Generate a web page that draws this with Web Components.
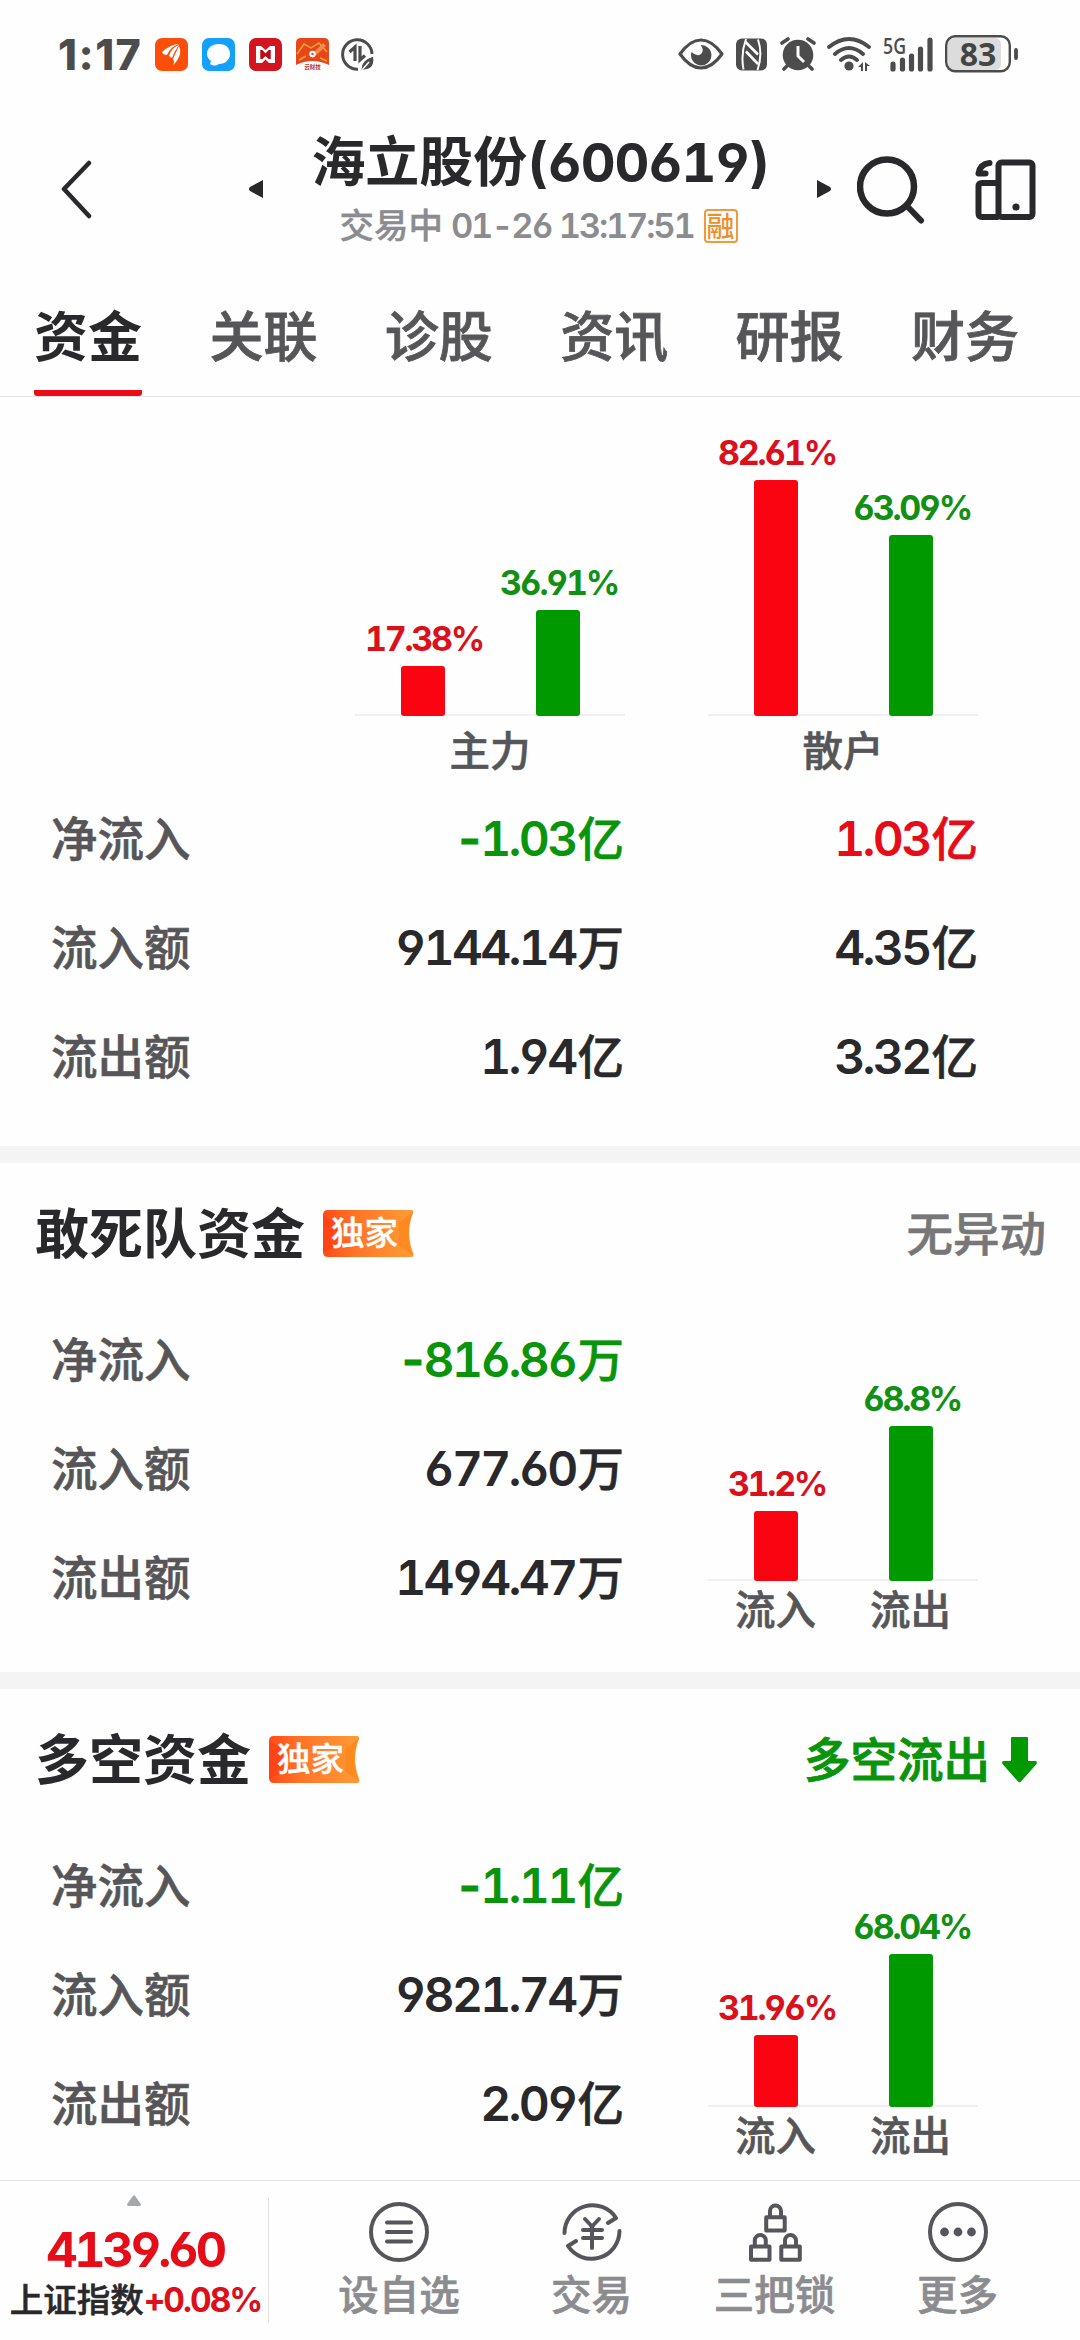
<!DOCTYPE html>
<html lang="zh-CN">
<head>
<meta charset="utf-8">
<title>海立股份(600619)</title>
<style>
  html, body { margin: 0; padding: 0; }
  body {
    --red: #e60c18;
    --green: #0a940c;
    --ink: #29292b;
    --sub: #565658;
    width: 1080px;
    height: 2340px;
    overflow: hidden;
    display: flex;
    flex-direction: column;
    background: #fefefe;
    color: var(--ink);
    font-family: Inter, "Noto Sans CJK SC", sans-serif;
    font-feature-settings: "tnum", "cv03", "cv04";
  }
  main { flex: 1; min-height: 0; overflow: hidden; }
</style>
</head>
<body>
<status-bar time="1:17" battery="83"></status-bar>
<stock-header name="海立股份" code="(600619)" state="交易中" time="01-26 13:17:51"></stock-header>
<tab-bar items="资金,关联,诊股,资讯,研报,财务" active="0"></tab-bar>
<main>
  <fund-overview>
    <bar-chart slot="chart" unit="2.863" bars="17.38:,36.91:" caption="主力"></bar-chart>
    <bar-chart slot="chart" unit="2.863" bars="82.61:,63.09:" caption="散户"></bar-chart>
    <fund-row label="净流入" values="-1.03亿,1.03亿" signed></fund-row>
    <fund-row label="流入额" values="9144.14万,4.35亿"></fund-row>
    <fund-row label="流出额" values="1.94亿,3.32亿"></fund-row>
  </fund-overview>
  <fund-card heading="敢死队资金">
    <span slot="status">无异动</span>
    <fund-row label="净流入" values="-816.86万" signed></fund-row>
    <fund-row label="流入额" values="677.60万"></fund-row>
    <fund-row label="流出额" values="1494.47万"></fund-row>
    <bar-chart slot="chart" unit="2.25" bars="31.2:流入,68.8:流出"></bar-chart>
  </fund-card>
  <fund-card heading="多空资金" trend="down">
    <span slot="status">多空流出</span>
    <fund-row label="净流入" values="-1.11亿" signed></fund-row>
    <fund-row label="流入额" values="9821.74万"></fund-row>
    <fund-row label="流出额" values="2.09亿"></fund-row>
    <bar-chart slot="chart" unit="2.25" bars="31.96:流入,68.04:流出"></bar-chart>
  </fund-card>
</main>
<bottom-bar>
  <index-quote slot="quote" value="4139.60" name="上证指数" change="+0.08%"></index-quote>
  <nav-item icon="list">设自选</nav-item>
  <nav-item icon="trade">交易</nav-item>
  <nav-item icon="locks">三把锁</nav-item>
  <nav-item icon="more">更多</nav-item>
</bottom-bar>

<script>
// Wraps the numeric part of a value so it can be sized apart from the unit
function splitUnit(text) {
  return text.replace(/^([-+\d.]+)/, '<span class="num">$1</span>').replace('>-', '><span class="minus">-</span>');
}

class StatusBar extends HTMLElement {
  connectedCallback() {
    this.attachShadow({ mode: 'open' }).innerHTML = `
      <style>
        :host { display: flex; align-items: center; height: 108px; flex: none; color: #4c4c4c; box-sizing: border-box; padding: 0 61px 0 58px; }
        .time { font-size: 43px; font-weight: 800; line-height: 60px; width: 97px; white-space: nowrap; font-feature-settings: normal; letter-spacing: 1.500px; }
        .apps { display: flex; gap: 14px; }
        .sys { display: flex; align-items: center; margin-left: auto; }
        svg { display: block; }
        .batt { position: relative; }
        .pct { position: absolute; left: 0; top: 0; width: 66px; text-align: center; font: 700 32px/38px "Open Sans", sans-serif; color: #444; }
      </style>
      <div class="time">${this.getAttribute('time')}</div>
      <div class="apps">
        <svg width="33" height="33" viewBox="0 0 33 33"><rect width="33" height="33" rx="7" fill="#fb4f09"/>
          <path d="M7 14Q16 6 24 6Q15 9 12 17Q8 17 7 14M14 18Q16 10 24 7Q20 12 17 20ZM18 21Q22 12 24 8Q26 12 25 16Q23 23 18 27Q20 24 18 21" fill="#fff"/></svg>
        <svg width="33" height="33" viewBox="0 0 33 33"><rect width="33" height="33" rx="7" fill="#14a0fb"/>
          <path d="M17 6C24 6 28 10 28 16C28 22 23 26 17 26Q12 29 8 26L9 23Q5 20 5 16C5 10 10 6 17 6" fill="#fff"/></svg>
        <svg width="33" height="33" viewBox="0 0 33 33"><rect width="33" height="33" rx="7" fill="#d31520"/>
          <path d="M7 8H12L16.500 12L21 8H26V25H20L16.500 21.500L13 25H7ZM11.500 12V21H13L16.500 18L20 21H21.500V12H20L16.500 15.500L13 12Z" fill="#fff" fill-rule="evenodd"/>
          <path d="M11.500 12H13L16.500 15.500L20 12H21.500V21H20L16.500 18L13 21H11.500Z" fill="#b70d18"/><path d="M14 8H19L16.500 11.500ZM14 25L16.500 22L19 25Z" fill="#d31520"/></svg>
        <svg width="33" height="33" viewBox="0 0 33 33"><path d="M5 0H28Q33 0 33 5V27Q16 19 0 27V5Q0 0 5 0" fill="#e5471b"/>
          <path d="M1 16L8 6L15 10L23 5L31 14M3 22L10 18M24 20L31 23" stroke="#f4a12f" stroke-width="1.500" fill="none"/><path d="M14 18L27 5L30 8L17 20Z" fill="#f58b55"/>
          <circle cx="16.500" cy="16" r="3.200" fill="#fff"/><circle cx="16.500" cy="16" r="1.200" fill="#e5471b"/>
          <text x="16.500" y="31" font-size="5.500" font-weight="700" text-anchor="middle" fill="#b8301a">云财技</text></svg>
        <svg width="33" height="33" viewBox="0 0 33 33" style="margin-left:-2px" fill="none" stroke="#4c4c4c"><path d="M17 31.200A14.700 14.700 0 1 1 31 16" stroke-width="3"/>
          <path d="M8.500 14L14 9V23M19 8V22L24 17.500" stroke-width="3.200"/>
          <path d="M20 33Q19 22 32.500 18Q35 31 23.500 32Z" fill="#4c4c4c" stroke="#fefefe" stroke-width="1.200"/><path d="M21 32L28 24" stroke="#fefefe" stroke-width="1.500"/></svg>
      </div>
      <div class="sys">
        <svg width="46" height="32" viewBox="0 0 46 32" style="margin-right:12px"><path d="M2 16Q12 2 23 2T44 16Q34 30 23 30T2 16Z" fill="none" stroke="#4c4c4c" stroke-width="3.200" stroke-linejoin="round"/>
          <path d="M22.500 7A10.200 10.200 0 1 1 13.500 14Q20 20 24 15Q26 11 22.500 7" fill="#4c4c4c"/></svg>
        <svg width="32" height="33" viewBox="0 0 32 33" style="margin-right:12px"><rect width="31" height="32" rx="6" fill="#4c4c4c" y="0.500"/>
          <path d="M10 1Q4.500 16 7.500 31.500M22 1.500Q27 16 21.500 32" stroke="#fefefe" stroke-width="2" fill="none"/>
          <path d="M9.500 4L22 16.500M10 13.500L22 26" stroke="#fefefe" stroke-width="2.600"/></svg>
        <svg width="36" height="34" viewBox="0 0 36 34" style="margin-right:11px"><circle cx="18" cy="18" r="15.300" fill="#4c4c4c"/>
          <path d="M2 6L8 2M28 2L34 6M8 28L4 32M28 28L32 32" stroke="#4c4c4c" stroke-width="3.600" stroke-linecap="round"/>
          <path d="M18 9V19L24 25" stroke="#fefefe" stroke-width="3" fill="none"/></svg>
        <svg width="44" height="34" viewBox="0 0 44 34" style="margin-right:12px"><g fill="none" stroke="#4c4c4c" stroke-width="3.800" stroke-linecap="round">
          <path d="M2 10Q22 -6 42 10M8 17Q22 5 36 17M14 23Q22 16 30 23"/></g><circle cx="22" cy="29" r="4.600" fill="#4c4c4c"/>
          <path d="M31 30L36 25V34H34V30ZM38 25L43 29H40V34H38Z" fill="#4c4c4c"/></svg>
        <svg width="52" height="35" viewBox="0 0 52 35" overflow="visible" style="margin-right:10px"><text x="0" y="17" font-size="22" font-weight="600" textLength="23" lengthAdjust="spacingAndGlyphs" fill="#4c4c4c" font-family="Open Sans">5G</text>
          <path d="M10 27V32M19.500 23V32M28.500 19V32M37.500 12V32M47 3V32" stroke="#4c4c4c" stroke-width="5.200" stroke-linecap="round"/></svg>
        <div class="batt"><svg width="74" height="38" viewBox="0 0 74 38"><rect x="3" y="3" width="53" height="32" rx="6" fill="#dcdcdc"/>
          <rect x="1.200" y="1.200" width="63.600" height="35" rx="9" fill="none" stroke="#4c4c4c" stroke-width="2.400"/><path d="M71 15V23" stroke="#4c4c4c" stroke-width="3.800" stroke-linecap="round"/></svg>
          <div class="pct">${this.getAttribute('battery')}</div></div>
      </div>`;
  }
}

class StockHeader extends HTMLElement {
  connectedCallback() {
    this.attachShadow({ mode: 'open' }).innerHTML = `
      <style>
        :host { display: grid; grid-template-columns: 249px 582px 249px; height: 167px; flex: none; }
        .left { padding: 52px 0 0 60px; }
        .mid { display: grid; grid-template-columns: 14px 1fr 14px; }
        .mid > svg { margin-top: 72px; }
        .text { text-align: center; }
        .title { margin-top: 20px; font-size: 54px; line-height: 70px; font-weight: 700; white-space: nowrap; }
        .code { letter-spacing: -1.300px; }
        .sub { display: flex; justify-content: center; align-items: center; margin-top: 7px; padding-right: 3px; font-size: 34.500px; line-height: 42px; font-weight: 500; color: #8b8c90; white-space: nowrap; }
        .sub span:first-child { -webkit-text-stroke: 0.4px; }
        .sub .time { font-weight: 600; letter-spacing: -2.200px; margin: 0 10px 0 8px; }
        .margin { box-sizing: border-box; width: 34px; height: 34px; border: 2px solid #f09a3e; border-radius: 4px; color: #ee8f2d; font: 500 28px/29px "Noto Sans CJK SC", sans-serif; text-align: center; }
        .right { display: flex; padding: 48px 0 0 26px; gap: 50px; }
        svg { display: block; }
      </style>
      <div class="left"><svg width="34" height="60" viewBox="0 0 34 60"><path d="M29 3L4 29L29 56" fill="none" stroke="#29292b" stroke-width="4.500" stroke-linecap="round" stroke-linejoin="round"/></svg></div>
      <div class="mid">
        <svg width="14" height="18" viewBox="0 0 14 18"><path d="M14 0V18L1 11Q-1 9 1 7Z" fill="#29292b"/></svg>
        <div class="text">
          <div class="title">${this.getAttribute('name')}<span class="code">${this.getAttribute('code')}</span></div>
          <div class="sub"><span>${this.getAttribute('state')}</span><span class="time">${this.getAttribute('time')}</span><span class="margin">融</span></div>
        </div>
        <svg width="14" height="18" viewBox="0 0 14 18"><path d="M0 0V18L13 11Q15 9 13 7Z" fill="#29292b"/></svg>
      </div>
      <div class="right">
        <svg width="68" height="69" viewBox="0 0 68 69" fill="none" stroke="#29292b" stroke-width="6.500"><circle cx="30" cy="30.500" r="27"/><path d="M50 50L64 64.500" stroke-width="6" stroke-linecap="round"/></svg>
        <svg width="62" height="62" viewBox="0 0 62 62" fill="none" stroke="#29292b" stroke-width="6" style="margin-top:3px">
          <rect x="23.500" y="3.500" width="34" height="54.500" rx="3"/><path d="M23.500 24H7Q3.500 24 3.500 27.500V54.500Q3.500 58 7 58H23.500"/>
          <path d="M14.500 4Q5 5 3.500 14.500H10.500" stroke-width="6" stroke-linecap="round" stroke-linejoin="round"/><circle cx="41" cy="48" r="3.600" fill="#29292b" stroke="none"/></svg>
      </div>`;
  }
}

class TabBar extends HTMLElement {
  connectedCallback() {
    const active = Number(this.getAttribute('active'));
    const tabs = this.getAttribute('items').split(',')
      .map((t, i) => `<div class="tab${i === active ? ' on' : ''}">${t}</div>`).join('');
    this.attachShadow({ mode: 'open' }).innerHTML = `
      <style>
        :host { display: flex; gap: 67.400px; box-sizing: border-box; height: 122px; flex: none; padding: 0 34px; border-bottom: 1px solid #e3e3e3; }
        .tab { box-sizing: border-box; width: 108px; height: 121px; padding-top: 26px; font-size: 54px; line-height: 74px; font-weight: 500; color: #565658; text-align: center; white-space: nowrap; -webkit-text-stroke: 0.8px; }
        .on { color: #29292b; font-weight: 700; -webkit-text-stroke: 0; background: linear-gradient(#ee0a17, #ee0a17) no-repeat bottom / 108px 6px; border-radius: 0 0 3px 3px; }
      </style>${tabs}`;
  }
}

class BarChart extends HTMLElement {
  connectedCallback() {
    const unit = Number(this.getAttribute('unit'));
    const caption = this.getAttribute('caption');
    const bars = this.getAttribute('bars').split(',').map(b => b.split(':'));
    const cols = bars.map(([pct], i) => `
      <div class="col ${i ? 'out' : 'in'}"><span>${pct}%</span><i style="height:${(pct * unit).toFixed(1)}px"></i></div>`).join('');
    const names = caption ? `<span>${caption}</span>` : bars.map(b => `<span>${b[1]}</span>`).join('');
    this.attachShadow({ mode: 'open' }).innerHTML = `
      <style>
        :host { display: flex; flex-direction: column; width: 270px; }
        .plot { flex: 1; display: flex; background: linear-gradient(#f0f0f0, #f0f0f0) no-repeat bottom / 100% 2px; }
        .col { width: 135px; display: flex; flex-direction: column; justify-content: flex-end; align-items: center; }
        .col span { font-size: 34px; line-height: 40px; font-weight: 650; letter-spacing: -2.300px; margin: 0 0 7px 3px; }
        .col i { width: 44px; border-radius: 3px; }
        .in { color: #dc101b; }
        .out { color: #119014; }
        .in i { background: #fa0411; }
        .out i { background: #009900; }
        .names { display: flex; box-sizing: border-box; height: ${caption ? 68 : 58}px; padding-top: ${caption ? 3 : 2}px; align-items: center; font-size: 40.500px; line-height: 50px; font-weight: 500; color: #565658; -webkit-text-stroke: 0.6px; }
        .names span { flex: 1; text-align: center; }
      </style>
      <div class="plot">${cols}</div>
      <div class="names">${names}</div>`;
  }
}

class FundRow extends HTMLElement {
  connectedCallback() {
    const signed = this.hasAttribute('signed');
    const values = this.getAttribute('values').split(',').map(v => {
      const tone = signed ? (v.startsWith('-') ? 'down' : 'up') : '';
      return `<div class="value ${tone}">${splitUnit(v)}</div>`;
    }).join('');
    this.attachShadow({ mode: 'open' }).innerHTML = `
      <style>
        :host { display: grid; grid-template-columns: 200px 373px 354px; height: 109px; padding-left: 51px; align-items: center; font-size: 46.500px; line-height: 60px; }
        .label { color: var(--sub); font-weight: 500; -webkit-text-stroke: 0.6px; }
        .value { text-align: right; font-weight: 500; white-space: nowrap; -webkit-text-stroke: 0.6px; }
        .num { font-size: 48px; font-weight: 600; letter-spacing: -2.700px; margin-right: 2px; -webkit-text-stroke: 0; }
        .minus { letter-spacing: -5px; -webkit-text-stroke: 1px; }
        .up { color: var(--red); }
        .down { color: var(--green); }
      </style>
      <div class="label">${this.getAttribute('label')}</div>${values}`;
  }
}

class FundOverview extends HTMLElement {
  connectedCallback() {
    this.attachShadow({ mode: 'open' }).innerHTML = `
      <style>
        :host { display: block; height: 749px; }
        .charts { display: flex; gap: 83px; height: 387px; padding-left: 355px; }
      </style>
      <div class="charts"><slot name="chart"></slot></div>
      <slot></slot>`;
  }
}

class FundCard extends HTMLElement {
  connectedCallback() {
    const down = this.getAttribute('trend') === 'down';
    this.attachShadow({ mode: 'open' }).innerHTML = `
      <style>
        :host { display: block; border-top: 17px solid #f4f4f4; }
        .head { display: flex; align-items: center; height: 142px; padding: 0 34px 0 35px; line-height: 70px; }
        h2 { margin: 2px 18px 0 0; font-size: 54px; font-weight: 700; }
        .status { display: flex; align-items: center; margin-left: auto; font-size: 46.500px; font-weight: 500; color: #777; -webkit-text-stroke: 0.6px; }
        .status.down { color: var(--green); -webkit-text-stroke: 1px; padding-right: 9px; gap: 12px; }
        .body { display: grid; grid-template-columns: 624px 270px; column-gap: 84px; height: 367px; }
        .chart { display: grid; height: 334px; }
      </style>
      <div class="head">
        <h2>${this.getAttribute('heading')}</h2><only-tag>独家</only-tag>
        <div class="status ${down ? 'down' : ''}"><slot name="status"></slot>
          ${down ? '<svg width="35" height="46" viewBox="0 0 35 46"><path d="M10 0H25Q26 0 26 1V24H34Q35.500 25 34.500 27L19 44.500Q17.500 46 16 44.500L0.500 27Q-.5 25 1 24H9V1Q9 0 10 0" fill="#009900"/></svg>' : ''}
        </div>
      </div>
      <div class="body">
        <div><slot></slot></div>
        <div class="chart"><slot name="chart"></slot></div>
      </div>`;
  }
}

class OnlyTag extends HTMLElement {
  connectedCallback() {
    this.attachShadow({ mode: 'open' }).innerHTML = `
      <style>
        :host { display: grid; width: 91px; height: 47px; margin-top: -1px; }
        svg, span { grid-area: 1 / 1; }
        span { z-index: 1; padding-left: 8px; font-size: 33.500px; line-height: 47px; font-weight: 500; color: #fff; -webkit-text-stroke: 0.4px; }
      </style>
      <svg width="91" height="47" viewBox="0 0 91 47">
        <defs><linearGradient id="g"><stop stop-color="#ff4a17"/><stop offset=".35" stop-color="#ff7428"/><stop offset="1" stop-color="#ff9c36"/></linearGradient></defs>
        <path d="M5 0H88Q91 0 90 3Q82 23 90.500 44Q91 47 88 47H5Q0 47 0 42V5Q0 0 5 0" fill="url(#g)"/>
        <path d="M0 5L14 13V35L0 43Z" fill="#ff3d12" opacity=".6"/><path d="M90 2L76 13V35L90 46Q81 23 90 2" fill="#fd8a1e"/>
      </svg>
      <span><slot></slot></span>`;
  }
}

class IndexQuote extends HTMLElement {
  connectedCallback() {
    this.attachShadow({ mode: 'open' }).innerHTML = `
      <style>
        :host { display: flex; flex-direction: column; align-items: center; width: 268px; color: var(--red); }
        svg { margin-top: 14px; }
        b { margin: 14px 0 0 2px; font-size: 48.500px; line-height: 60px; font-weight: 700; letter-spacing: -3.400px; }
        div { line-height: 40px; margin: 0 0 0 3px; font-size: 33.500px; font-weight: 650; letter-spacing: -2px; white-space: nowrap; color: #dc101b; }
        em { font-style: normal; font-weight: 500; color: #29292b; letter-spacing: 0; -webkit-text-stroke: 0.6px; }
      </style>
      <svg width="14" height="11" viewBox="0 0 14 11"><path d="M6 .8Q7 -.5 8 .8L13.800 9Q14 11 12.500 11H1.500Q0 11 .2 9Z" fill="#a6a7a9"/></svg>
      <b>${this.getAttribute('value')}</b>
      <div><em>${this.getAttribute('name')}</em>${this.getAttribute('change')}</div>`;
  }
}

const NAV_ICONS = {
  list: '<circle cx="30" cy="30" r="28"/><path d="M18 20.500H42M18 30H42M18 39.500H42"/>',
  trade: '<path d="M2.500 31A28 28 0 0 1 54 16L46 21M57.500 29A28 28 0 0 1 6 44L14 39"/><path d="M23 17L30 24.500L37 17M21 28H40M21 36H40M30 25V46"/>',
  locks: '<rect x="21.200" y="15.200" width="18.500" height="13.200"/><path d="M25 15V9A5.500 5.500 0 0 1 36 9V15"/><rect x="6" y="44.500" width="18.500" height="13.200"/><path d="M9.800 44V38.500A5.500 5.500 0 0 1 20.800 38.500V44"/><rect x="36.300" y="44.500" width="18.500" height="13.200"/><path d="M40 44V38.500A5.500 5.500 0 0 1 51 38.500V44"/>',
  more: '<circle cx="30" cy="30" r="28"/><g fill="#55555b" stroke="none"><circle cx="16.500" cy="30" r="4.400"/><circle cx="30" cy="30" r="4.400"/><circle cx="43.500" cy="30" r="4.400"/></g>'
};

class NavItem extends HTMLElement {
  connectedCallback() {
    this.attachShadow({ mode: 'open' }).innerHTML = `
      <style>
        :host { display: flex; flex-direction: column; align-items: center; font-size: 40.500px; line-height: 50px; font-weight: 500; color: #8b8c90; -webkit-text-stroke: 0.6px; }
        svg { margin: 21px 0 9px; }
      </style>
      <svg width="60" height="60" viewBox="0 0 60 60" fill="none" stroke="#55555b" stroke-width="4" stroke-linecap="round" stroke-linejoin="round">${NAV_ICONS[this.getAttribute('icon')]}</svg>
      <span><slot></slot></span>`;
  }
}

class BottomBar extends HTMLElement {
  connectedCallback() {
    this.attachShadow({ mode: 'open' }).innerHTML = `
      <style>
        :host { display: flex; box-sizing: border-box; height: 160px; flex: none; border-top: 1px solid #e3e3e3; background: #fefefe; }
        .line { width: 1px; height: 125px; margin-top: 17px; background: #e0e0e0; }
        .items { display: grid; grid-template-columns: 202px 183px 183px 183px; padding-left: 29px; }
      </style>
      <slot name="quote"></slot>
      <div class="line"></div>
      <div class="items"><slot></slot></div>`;
  }
}

customElements.define('status-bar', StatusBar);
customElements.define('stock-header', StockHeader);
customElements.define('tab-bar', TabBar);
customElements.define('bar-chart', BarChart);
customElements.define('fund-row', FundRow);
customElements.define('fund-overview', FundOverview);
customElements.define('fund-card', FundCard);
customElements.define('only-tag', OnlyTag);
customElements.define('index-quote', IndexQuote);
customElements.define('nav-item', NavItem);
customElements.define('bottom-bar', BottomBar);
</script>
</body>
</html>
